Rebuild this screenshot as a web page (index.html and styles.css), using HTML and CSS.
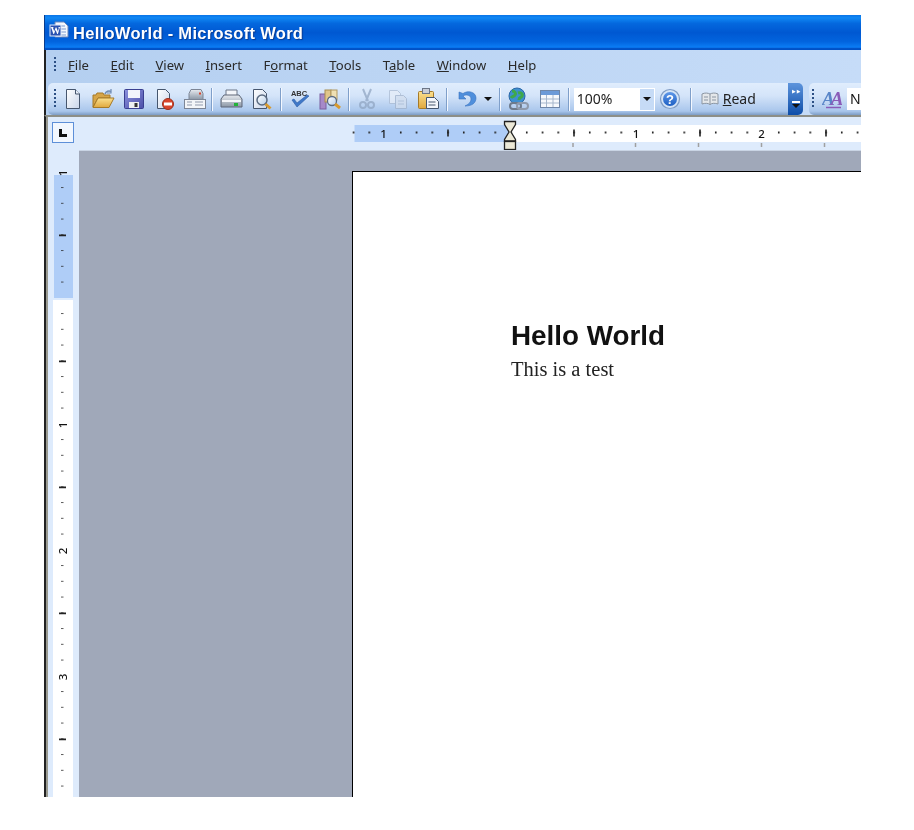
FILE: index.html
```html
<!DOCTYPE html>
<html lang="en">
<head>
<meta charset="utf-8">
<title>HelloWorld - Microsoft Word</title>
<link rel="stylesheet" href="styles.css">
</head>
<body>
<div class="window">
  <header class="titlebar">
    <svg class="app-icon" width="20" height="20" viewBox="0 0 20 20">
      <path d="M6 1h9l4 4v11H6z" fill="#f4f8fe" stroke="#6d86b8"/>
      <path d="M8 5h8M9 8h8M9 11h8M9 14h8" stroke="#7d9bd0"/>
      <rect x="1" y="4" width="11" height="11" fill="#2b52b0" stroke="#dfe8fa"/>
      <text x="6.500" y="13" class="app-icon-w">W</text>
    </svg>
    <span class="title-text">HelloWorld - Microsoft Word</span>
  </header>

  <nav class="menubar">
    <span class="grip grip-menu"></span>
    <span class="menu m-file"><u>F</u>ile</span>
    <span class="menu"><u>E</u>dit</span>
    <span class="menu"><u>V</u>iew</span>
    <span class="menu"><u>I</u>nsert</span>
    <span class="menu">F<u>o</u>rmat</span>
    <span class="menu"><u>T</u>ools</span>
    <span class="menu">T<u>a</u>ble</span>
    <span class="menu"><u>W</u>indow</span>
    <span class="menu"><u>H</u>elp</span>
  </nav>

  <div class="toolbar">
    <div class="toolstrip">
      <span class="grip grip-tool"></span>
      <span class="btn"><svg width="24" height="24" viewBox="0 0 24 24">
        <defs>
          <linearGradient id="paper" x1="0" y1="0" x2="1" y2="1"><stop offset="0" stop-color="#fff"/><stop offset="1" stop-color="#c9d5ea"/></linearGradient>
          <linearGradient id="folder" x1="0" y1="0" x2="0" y2="1"><stop offset="0" stop-color="#fbe08f"/><stop offset="1" stop-color="#e0a83e"/></linearGradient>
          <linearGradient id="steel" x1="0" y1="0" x2="0" y2="1"><stop offset="0" stop-color="#e8ebf0"/><stop offset="1" stop-color="#8b97a6"/></linearGradient>
          <linearGradient id="disk" x1="0" y1="0" x2="1" y2="1"><stop offset="0" stop-color="#8d93de"/><stop offset="1" stop-color="#4b4fa8"/></linearGradient>
          <linearGradient id="glass" x1="0" y1="0" x2="1" y2="1"><stop offset="0" stop-color="#fff"/><stop offset="1" stop-color="#b5cdea"/></linearGradient>
          <linearGradient id="helpfill" x1="0" y1="0" x2="0" y2="1"><stop offset="0" stop-color="#5f98e8"/><stop offset="1" stop-color="#1d5fc4"/></linearGradient>
        </defs>
        <path d="M5.500 2.500h9l4 4.500V21.500h-13z" fill="url(#paper)" stroke="#46566e"/>
        <path d="M14.500 2.500v4.500h4.500" fill="#e8eef8" stroke="#46566e"/>
      </svg></span>
      <span class="btn"><svg width="24" height="24" viewBox="0 0 24 24">
        <path d="M14 7c1-3 4-3.500 6-2.500" fill="none" stroke="#6f8cb4" stroke-width="1.600"/>
        <path d="M20 2v4h-4" fill="none" stroke="#6f8cb4" stroke-width="1.200"/>
        <path d="M2 20V8h3l1-2h6l1 2h6v3H7z" fill="#d6a548" stroke="#a67a28"/>
        <path d="M2 20.500l5-9.500h16l-5 9.500z" fill="url(#folder)" stroke="#a67a28"/>
      </svg></span>
      <span class="btn"><svg width="24" height="24" viewBox="0 0 24 24">
        <rect x="2.500" y="2.500" width="19" height="19" rx="1" fill="url(#disk)" stroke="#3a3f90"/>
        <rect x="6" y="3" width="12" height="8" fill="#f2f5fb"/>
        <rect x="7" y="15" width="10" height="6" fill="#eef0f2"/>
        <rect x="12.500" y="16" width="3" height="4" fill="#333"/>
      </svg></span>
      <span class="btn"><svg width="24" height="24" viewBox="0 0 24 24">
        <path d="M5.500 2.500h8l4 4v9h-4v6h-8z" fill="url(#paper)" stroke="#46566e"/>
        <circle cx="16" cy="17" r="5.500" fill="#d9452c" stroke="#9c2e1a"/>
        <rect x="12" y="15.500" width="8" height="3" fill="#fff"/>
      </svg></span>
      <span class="btn"><svg width="24" height="24" viewBox="0 0 24 24">
        <path d="M8 2.500h10l2 4v6H6v-6z" fill="url(#steel)" stroke="#7d8696"/>
        <rect x="16" y="5.500" width="2" height="2" fill="#d9452c"/>
        <rect x="1.500" y="12.500" width="21" height="9" fill="#f3f5f8" stroke="#7d8696"/>
        <path d="M4 15h5M4 18h5M12 15h8M12 18h8" stroke="#8f9aac" stroke-width="1.200"/>
      </svg></span>
      <span class="sep sep-a"></span>
      <span class="btn"><svg width="24" height="24" viewBox="0 0 24 24">
        <path d="M7 3h11v7H7z" fill="#f4f6fa" stroke="#6d7687"/>
        <path d="M5 8h15l3 4v8H2v-8z" fill="url(#steel)" stroke="#5e6778"/>
        <rect x="3" y="13" width="19" height="2" fill="#f4f6fa"/>
        <rect x="15" y="16" width="4" height="3" fill="#22b33a"/>
      </svg></span>
      <span class="btn"><svg width="24" height="24" viewBox="0 0 24 24">
        <path d="M3.500 2.500h9l4 4v15h-13z" fill="url(#paper)" stroke="#46566e"/>
        <circle cx="12" cy="13" r="5" fill="url(#glass)" stroke="#5a6a80" stroke-width="1.500"/>
        <path d="M15.500 17l5 4.500" stroke="#d8992e" stroke-width="3"/>
      </svg></span>
      <span class="sep sep-b"></span>
      <span class="btn"><svg width="24" height="24" viewBox="0 0 24 24">
        <text x="12" y="8.500" class="abc">ABC</text>
        <path d="M5 13l5 7L22 9l-2-1-10 8-3-4z" fill="#3f78c8" stroke="#2a5aa5" stroke-width=".6"/>
      </svg></span>
      <span class="btn"><svg width="24" height="24" viewBox="0 0 24 24">
        <rect x="2" y="7" width="6" height="15" fill="#a689c8" stroke="#7a5fa0"/>
        <rect x="7" y="3" width="6" height="12" fill="#e0c68a" stroke="#a88d50"/>
        <rect x="13" y="3" width="6" height="10" fill="#efe0b4" stroke="#b09860"/>
        <circle cx="14" cy="14" r="4.500" fill="url(#glass)" stroke="#5a6a80" stroke-width="1.300"/>
        <path d="M17 17l5 4" stroke="#d8992e" stroke-width="3"/>
      </svg></span>
      <span class="sep sep-c"></span>
      <span class="btn btn-off"><svg width="24" height="24" viewBox="0 0 24 24">
        <path d="M8 2l5 12M16 2l-5 12" stroke="#8ea3c0" stroke-width="2" fill="none"/>
        <circle cx="8" cy="18" r="3" fill="none" stroke="#8ea3c0" stroke-width="2"/>
        <circle cx="16" cy="18" r="3" fill="none" stroke="#8ea3c0" stroke-width="2"/>
      </svg></span>
      <span class="btn btn-off"><svg width="24" height="24" viewBox="0 0 24 24">
        <path d="M3.500 3.500h8l3 3v10h-11z" fill="#e8eef8" stroke="#a9b9d0"/>
        <path d="M9.500 8.500h8l3 3v10h-11z" fill="#d5dfee" stroke="#a0b0c8"/>
        <path d="M12 14h6M12 17h6" stroke="#a9b9d0"/>
      </svg></span>
      <span class="btn"><svg width="24" height="24" viewBox="0 0 24 24">
        <rect x="2.500" y="4.500" width="15" height="17" rx="1" fill="url(#folder)" stroke="#a67a28"/>
        <rect x="6.500" y="1.500" width="7" height="5" fill="#c9ced8" stroke="#6d7687"/>
        <path d="M10.500 10.500h8l4 4v7h-12z" fill="#f4f6fa" stroke="#46566e"/>
        <path d="M12.500 15h7M12.500 18h7" stroke="#46566e"/>
      </svg></span>
      <span class="sep sep-d"></span>
      <span class="btn"><svg width="24" height="24" viewBox="0 0 24 24">
        <path d="M5 5v7h7l-3-3c3-2 8-1 8 3 0 3-2 5-6 7 7 0 11-3 11-8 0-6-8-8-13-4.500z" fill="#4f8fdc" stroke="#3a72c0" stroke-width=".6"/>
      </svg></span>
      <span class="btn-arrow"><span class="caret"></span></span>
      <span class="sep sep-e"></span>
      <span class="btn"><svg width="24" height="24" viewBox="0 0 24 24">
        <circle cx="10" cy="9" r="8" fill="#3f8fd0" stroke="#2a66a8"/>
        <path d="M5 4c3 0 4 2 3 4s-3 1-4 3M11 6c3-1 5 1 4 3s-3 1-3 4" fill="none" stroke="#3fa84a" stroke-width="3"/>
        <rect x="3" y="16" width="11" height="6" rx="3" fill="none" stroke="#6d7a8c" stroke-width="2"/>
        <rect x="10" y="16" width="11" height="6" rx="3" fill="none" stroke="#8f9aac" stroke-width="2"/>
      </svg></span>
      <span class="btn"><svg width="24" height="24" viewBox="0 0 24 24">
        <rect x="2.500" y="3.500" width="19" height="17" fill="#f6f8fc" stroke="#6f86a8"/>
        <rect x="3" y="4" width="18" height="4" fill="#6c9ad8"/>
        <path d="M3 12h18M3 16h18M8.500 8v12M15 8v12" stroke="#a6b6cc"/>
      </svg></span>
      <span class="sep sep-f"></span>
      <span class="zoombox"><span class="zoomval">100%</span><span class="zoomdrop"><span class="caret"></span></span></span>
      <span class="btn btn-help"><svg width="22" height="22" viewBox="0 0 22 22">
        <circle cx="11" cy="11" r="9.500" fill="#d5e4f6" stroke="#7f9cc4" stroke-width="1.200"/>
        <circle cx="11" cy="11" r="7" fill="url(#helpfill)"/>
        <text x="11" y="15.500" class="help-q">?</text>
      </svg></span>
      <span class="sep sep-g"></span>
      <svg class="book" width="18" height="16" viewBox="0 0 18 16">
        <path d="M1 3c3-1.500 6-1 8 0 2-1 5-1.500 8 0v10c-3-1-6-1-8 .5-2-1.500-5-1.500-8-.5z" fill="#e4e7ea" stroke="#8b95a2"/>
        <path d="M9 3v10.500M3 6h4M3 9h4M11 6h4M11 9h4" stroke="#8b95a2"/>
      </svg>
      <span class="read-label"><u>R</u>ead</span>
    </div>
    <span class="chevron"><span class="chev-top">&#8227;&#8227;</span><span class="chev-bar"></span><span class="caret caret-white"></span></span>
    <div class="toolstrip-2">
      <span class="grip grip-tool2"></span>
      <svg class="style-icon" width="20" height="20" viewBox="0 0 20 20">
        <text x="0" y="16" class="aa"><tspan class="aa-1">A</tspan><tspan class="aa-2">A</tspan></text>
        <path d="M4 18.500h15" stroke="#8a5cb8" stroke-width="1.500"/>
      </svg>
      <span class="stylebox">N</span>
    </div>
  </div>

  <div class="rulerrow">
    <span class="tab-btn"><span class="tab-l"></span></span>
    <svg class="hruler" width="521" height="33" viewBox="0 0 521 33">
      <defs>
        <pattern id="hdots" x="12.700" y="0" width="15.750" height="33" patternUnits="userSpaceOnUse">
          <rect x="0" y="14.500" width="1.600" height="2" fill="#222"/>
        </pattern>
      </defs>
      <rect x="14.500" y="8" width="155.500" height="17" fill="#afcdf7"/>
      <rect x="170" y="8" width="351" height="17" fill="#fff"/>
      <rect x="0" y="0" width="521" height="33" fill="url(#hdots)"/>
      <rect x="37" y="9" width="13" height="15" fill="#afcdf7"/>
      <text x="43.500" y="21" class="rnum">1</text>
      <rect x="107.200" y="12.500" width="1.600" height="7" fill="#222"/>
      <rect x="233.200" y="12.500" width="1.600" height="7" fill="#222"/>
      <rect x="290" y="9" width="13" height="15" fill="#fff"/>
      <text x="296" y="21" class="rnum">1</text>
      <rect x="359.200" y="12.500" width="1.600" height="7" fill="#222"/>
      <rect x="415" y="9" width="13" height="15" fill="#fff"/>
      <text x="421.500" y="21" class="rnum">2</text>
      <rect x="485.200" y="12.500" width="1.600" height="7" fill="#222"/>
      <path d="M233 26v4M295.500 26v4M358.500 26v4M421.500 26v4M484.500 26v4" stroke="#a0a0a0" stroke-width="1.500"/>
      <path d="M164.500 4.500h11v3l-4.500 7.500 4.500 7.500v1.500h-11v-1.500l4.500-7.500-4.500-7.500z" fill="#ece9d8" stroke="#222" stroke-width="1.300"/>
      <rect x="164.500" y="24.500" width="11" height="8" fill="#ece9d8" stroke="#222" stroke-width="1.300"/>
    </svg>
  </div>

  <main class="mainrow">
    <svg class="vruler" width="31" height="647" viewBox="0 0 31 647">
      <defs>
        <pattern id="vdots" x="0" y="22.300" width="31" height="15.750" patternUnits="userSpaceOnUse">
          <rect x="13" y="15" width="2.500" height="1.800" fill="#222"/>
        </pattern>
      </defs>
      <rect x="6" y="25" width="19" height="123" fill="#afcdf7"/>
      <rect x="5" y="150" width="20" height="497" fill="#fff"/>
      <rect x="0" y="23" width="31" height="624" fill="url(#vdots)"/>
      <rect x="6" y="147" width="19" height="1" fill="#afcdf7"/>
      <rect x="5" y="148" width="20" height="2" fill="#deebfc"/>
      <rect x="8" y="268" width="14" height="14" fill="#fff"/>
      <rect x="8" y="394" width="14" height="14" fill="#fff"/>
      <rect x="8" y="520" width="14" height="14" fill="#fff"/>
      <text transform="translate(19 23) rotate(-90)" class="rnum">1</text>
      <text transform="translate(19 275) rotate(-90)" class="rnum">1</text>
      <text transform="translate(19 401) rotate(-90)" class="rnum">2</text>
      <text transform="translate(19 527) rotate(-90)" class="rnum">3</text>
      <path d="M11 85.450h7M11 211.450h7M11 337.450h7M11 463.450h7M11 589.450h7" stroke="#222" stroke-width="1.800"/>
    </svg>
    <div class="workspace">
      <article class="page">
        <h1 class="doc-title">Hello World</h1>
        <p class="doc-text">This is a test</p>
      </article>
    </div>
  </main>
</div>
</body>
</html>
```
FILE: styles.css
```css
* { box-sizing: border-box; }
html, body { margin: 0; background: #fff; }
body { padding: 15px 0 0 44px; height: 830px; overflow: hidden; }
.window {
  width: 817px;
  height: 782px;
  display: flex;
  flex-direction: column;
  overflow: hidden;
  filter: blur(0.45px);
  font-family: "Noto Sans", "Liberation Sans", sans-serif;
}
.titlebar {
  height: 35px;
  flex: none;
  display: flex;
  align-items: center;
  padding-left: 4px;
  background: linear-gradient(#0a74e8 0, #1088f4 8%, #0468de 24%, #0058d2 50%, #0264de 76%, #0b7cf4 92%, #0050c6 96%, #0050c6 100%);
  border-left: 1px solid #0a3c8c;
}
.app-icon { flex: none; margin-top: -3px; }
.app-icon-w { font: bold 10px "Liberation Serif", serif; fill: #fff; text-anchor: middle; }
.title-text {
  margin: 1px 0 0 4px;
  color: #fff;
  font: bold 16.500px "Liberation Sans", sans-serif;
  letter-spacing: 0.3px;
  text-shadow: 1px 1px 1px #0a3a90;
}
.menubar {
  height: 33px;
  flex: none;
  display: flex;
  align-items: center;
  gap: 21.500px;
  padding-bottom: 1px;
  background: linear-gradient(90deg, #b4cff0, #c6dcf8);
  border-left: 2px solid #222;
  color: #2a2a2a;
  font-size: 13.100px;
}
.menu { line-height: 1; white-space: nowrap; }
.grip {
  flex: none;
  display: block;
  width: 2px;
  background: repeating-linear-gradient(#2c4f84 0 2px, transparent 2px 4px);
}
.grip-menu { height: 14px; margin: -4px -9.500px 0 8px; }
.toolbar {
  height: 32px;
  flex: none;
  display: flex;
  background: linear-gradient(90deg, #b4cff0, #c6dcf8);
  border-left: 2px solid #222;
}
.toolstrip {
  width: 740px;
  margin-left: 2px;
  display: flex;
  align-items: center;
  padding-left: 6px;
  border-radius: 5px 0 0 5px;
  background: linear-gradient(#e0edfd 0, #d4e4f9 40%, #a9c6ec 88%, #7d9cc4 100%);
  color: #222;
}
.grip-tool { height: 20px; margin-right: 1.250px; }
.btn { width: 30.500px; flex: none; display: flex; justify-content: center; align-items: center; height: 24px; }
.btn-off { opacity: .7; }
.sep { flex: none; width: 2px; height: 23px; background: linear-gradient(90deg, #7f9fca 50%, #f4f8ff 50%); }
.sep-a { margin: 0 3px 0 1px; }
.sep-b { margin: 0 2px 0 3px; }
.sep-c { margin: 0 2px 0 3px; }
.sep-d { margin: 0 2px 0 3px; }
.sep-e { margin: 0 3px; }
.sep-f { margin: 0 4px 0 3px; }
.sep-g { margin: 0 9px 0 5px; }
.btn-arrow { width: 15px; flex: none; display: flex; justify-content: center; }
.caret { display: block; width: 0; height: 0; border: 4px solid transparent; border-top: 4px solid #111; border-bottom: 0; }
.abc { font: bold 7.500px "Liberation Sans", sans-serif; fill: #333; text-anchor: middle; }
.zoombox {
  flex: none;
  width: 81px;
  height: 23px;
  display: flex;
  background: #fff;
  font-size: 14px;
  align-items: center;
}
.zoomval { flex: 1; padding-left: 3px; line-height: 1; }
.zoomdrop {
  width: 16px;
  height: 23px;
  display: flex;
  align-items: center;
  justify-content: center;
  background: #c6dbf6;
  border: 1px solid #fff;
}
.btn-help { width: 30px; }
.help-q { font: bold 13px "Liberation Sans", sans-serif; fill: #fff; text-anchor: middle; }
.book { flex: none; }
.read-label { margin-left: 4px; font-size: 14px; line-height: 1; }
.chevron {
  flex: none;
  width: 15px;
  display: flex;
  flex-direction: column;
  align-items: center;
  padding-top: 5px;
  border-radius: 0 5px 5px 0;
  background: linear-gradient(#5d94dc, #0d4da8);
}
.chev-top { color: #fff; font: bold 9px/8px "DejaVu Sans", sans-serif; letter-spacing: -1px; }
.chev-bar { width: 8px; height: 2px; margin-top: 5px; background: #fff; }
.caret-white { margin-top: 1px; }
.toolstrip-2 {
  flex: 1;
  margin-left: 6px;
  display: flex;
  align-items: center;
  border-radius: 5px 0 0 5px;
  background: linear-gradient(#e0edfd 0, #d4e4f9 40%, #a9c6ec 88%, #7d9cc4 100%);
}
.grip-tool2 { height: 20px; margin-left: 3px; }
.style-icon { margin-left: 8px; flex: none; }
.aa { font: italic bold 19px "Liberation Serif", serif; letter-spacing: -4px; }
.aa-1 { fill: #5a86c8; }
.aa-2 { fill: #8a5cb8; }
.stylebox {
  flex: none;
  width: 14px;
  height: 22px;
  margin-left: 5px;
  padding-left: 3px;
  background: #fff;
  font-size: 14px;
  line-height: 22px;
  color: #111;
}

.rulerrow {
  height: 35px;
  flex: none;
  display: flex;
  background: #deebfc;
  border-top: 2px solid #8d8f88;
  border-left: 2px solid #222;
  box-shadow: inset 2px 0 0 #9a9a90;
}
.tab-btn {
  flex: none;
  width: 22px;
  height: 21px;
  margin: 5px 0 0 6px;
  display: flex;
  align-items: center;
  justify-content: center;
  background: #f2f7fe;
  border: 1px solid #5d8fd8;
}
.tab-l { display: block; width: 8px; height: 8px; border-left: 3px solid #111; border-bottom: 3px solid #111; }
.hruler { flex: none; margin-left: 266px; display: block; }
.rnum { font: 500 11.500px "Noto Sans", sans-serif; fill: #111; text-anchor: middle; }
.mainrow {
  flex: 1;
  min-height: 0;
  display: flex;
  background: #deebfc;
  border-left: 2px solid #222;
  box-shadow: inset 2px 0 0 #9a9a90;
}
.vruler { flex: none; display: block; margin-left: 2px; width: 31px; }
.workspace {
  flex: 1;
  min-width: 0;
  padding: 20px 0 0 273px;
  background: #a0a8b9;
  border-top: 1px solid #c9d4e4;
}
.page {
  height: 100%;
  background: #fff;
  border-top: 1px solid #000;
  border-left: 1px solid #000;
  padding: 148px 0 0 158px;
}
.doc-title {
  margin: 0;
  font: bold 27.800px/32px "Liberation Sans", sans-serif;
  color: #111;
}
.doc-text {
  margin: 0;
  padding-top: 1px;
  font: 20.500px/32px "Liberation Serif", serif;
  color: #222;
}
```
